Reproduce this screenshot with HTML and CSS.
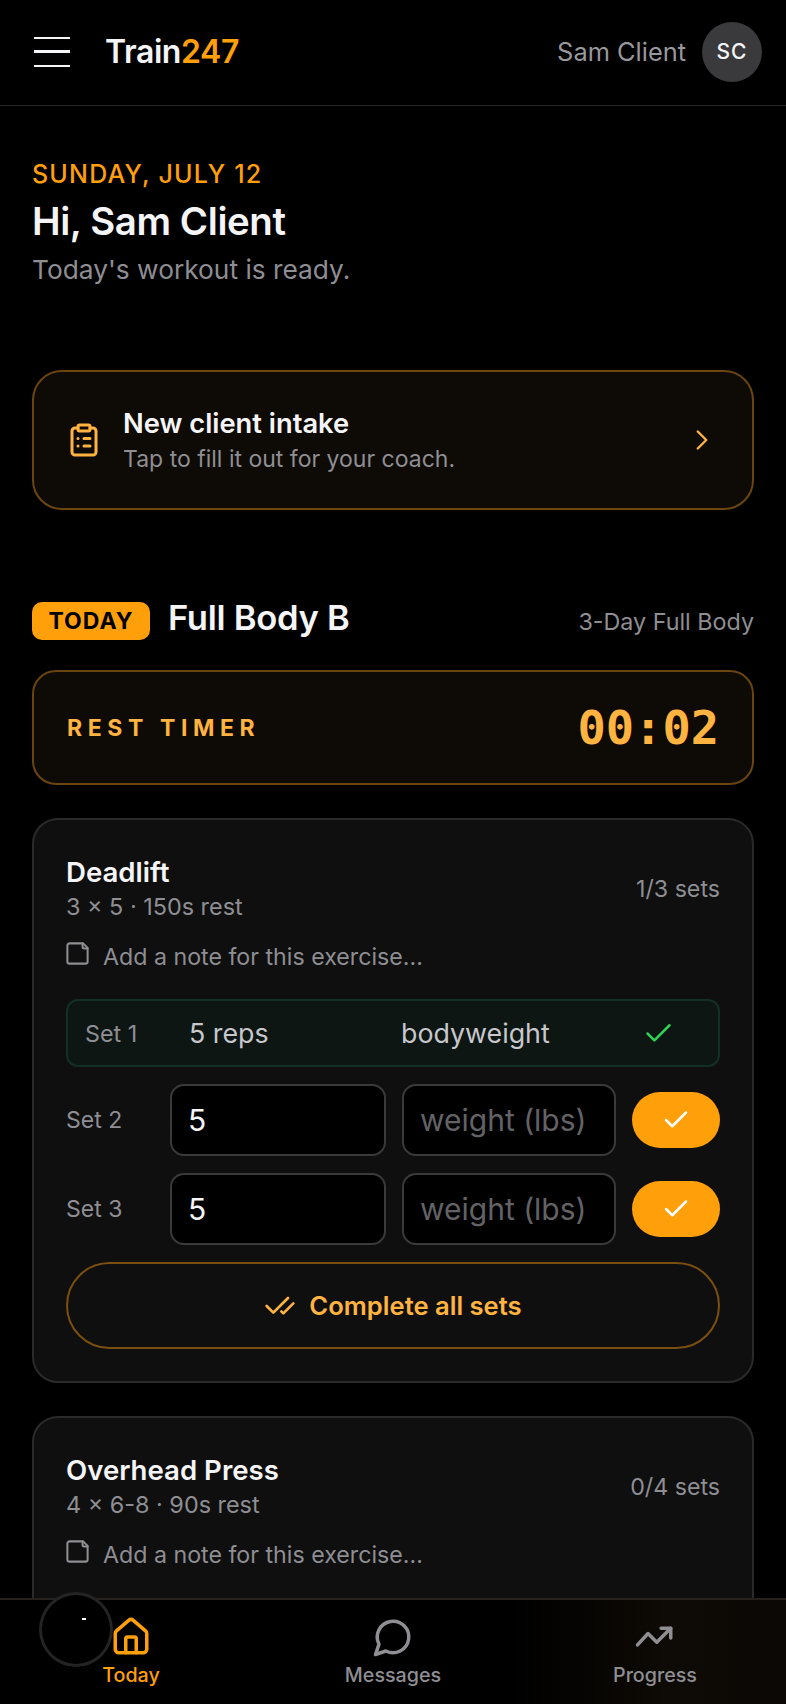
FILE: index.html
```html
<!DOCTYPE html>
<html lang="en">
<head>
    <meta charset="UTF-8">
    <meta name="viewport" content="width=device-width, initial-scale=1.0">
    <title>Train247</title>
    <link rel="stylesheet" href="styles.css">
</head>
<body>
    <div class="app">
        <header class="topbar">
            <div class="burger"><span></span><span class="mid"></span><span></span></div>
            <div class="logo">Train<span>247</span></div>
            <div class="user">Sam Client</div>
            <div class="avatar">SC</div>
        </header>

        <main class="content">
            <section class="hello">
                <div class="date">SUNDAY, JULY 12</div>
                <h1>Hi, Sam Client</h1>
                <p>Today's workout is ready.</p>
            </section>

            <section class="intake">
                <svg class="intake-icon" viewBox="0 0 24 24" fill="none" stroke="currentColor" stroke-width="2" stroke-linecap="round" stroke-linejoin="round">
                    <rect x="8" y="2" width="8" height="4" rx="1"/>
                    <path d="M16 4h2a2 2 0 0 1 2 2v14a2 2 0 0 1-2 2H6a2 2 0 0 1-2-2V6a2 2 0 0 1 2-2h2"/>
                    <path d="M12 11h4M12 16h4M8 11h.01M8 16h.01"/>
                </svg>
                <div class="intake-text">
                    <strong>New client intake</strong>
                    <span>Tap to fill it out for your coach.</span>
                </div>
                <svg class="chevron" viewBox="0 0 24 24" fill="none" stroke="currentColor" stroke-width="1.7" stroke-linecap="round" stroke-linejoin="round"><path d="m9 18 6-6-6-6"/></svg>
            </section>

            <section class="plan">
                <span class="badge">TODAY</span>
                <h2>Full Body B</h2>
                <span class="plan-name">3-Day Full Body</span>
            </section>

            <section class="timer">
                <span class="timer-label">REST TIMER</span>
                <span class="timer-value">00:02</span>
            </section>

            <section class="card">
                <div class="card-head">
                    <div>
                        <h3>Deadlift</h3>
                        <div class="meta">3 × 5 · 150s rest</div>
                    </div>
                    <div class="count">1/3 sets</div>
                </div>
                <div class="note">
                    <svg viewBox="0 0 24 24" fill="none" stroke="currentColor" stroke-width="1.8" stroke-linecap="round" stroke-linejoin="round"><path d="M17 3H5a2 2 0 0 0-2 2v14a2 2 0 0 0 2 2h14a2 2 0 0 0 2-2V7Z"/><path d="M16.5 3v3a1.5 1.5 0 0 0 1.5 1.5h3"/></svg>
                    <span>Add a note for this exercise...</span>
                </div>
                <div class="set-done">
                    <span class="set-label">Set 1</span>
                    <span class="done-reps">5 reps</span>
                    <span class="done-weight">bodyweight</span>
                    <svg viewBox="0 0 24 24" fill="none" stroke="currentColor" stroke-width="1.8" stroke-linecap="round" stroke-linejoin="round"><path d="M20 6 9 17l-5-5"/></svg>
                </div>
                <div class="set-row">
                    <span class="set-name">Set 2</span>
                    <input class="field" type="text" value="5">
                    <input class="field" type="text" placeholder="weight (lbs)">
                    <button class="log-btn"><svg viewBox="0 0 24 24" fill="none" stroke="currentColor" stroke-width="2" stroke-linecap="round" stroke-linejoin="round"><path d="M20 6 9 17l-5-5"/></svg></button>
                </div>
                <div class="set-row">
                    <span class="set-name">Set 3</span>
                    <input class="field" type="text" value="5">
                    <input class="field" type="text" placeholder="weight (lbs)">
                    <button class="log-btn"><svg viewBox="0 0 24 24" fill="none" stroke="currentColor" stroke-width="2" stroke-linecap="round" stroke-linejoin="round"><path d="M20 6 9 17l-5-5"/></svg></button>
                </div>
                <button class="complete">
                    <svg viewBox="0 0 24 24" fill="none" stroke="currentColor" stroke-width="2" stroke-linecap="round" stroke-linejoin="round"><path d="M18 6 7 17l-5-5"/><path d="m22 10-7.5 7.5L13 16"/></svg>
                    Complete all sets
                </button>
            </section>

            <section class="card card-next">
                <div class="card-head">
                    <div>
                        <h3>Overhead Press</h3>
                        <div class="meta">4 × 6-8 · 90s rest</div>
                    </div>
                    <div class="count">0/4 sets</div>
                </div>
                <div class="note">
                    <svg viewBox="0 0 24 24" fill="none" stroke="currentColor" stroke-width="1.8" stroke-linecap="round" stroke-linejoin="round"><path d="M17 3H5a2 2 0 0 0-2 2v14a2 2 0 0 0 2 2h14a2 2 0 0 0 2-2V7Z"/><path d="M16.5 3v3a1.5 1.5 0 0 0 1.5 1.5h3"/></svg>
                    <span>Add a note for this exercise...</span>
                </div>
            </section>
        </main>

        <nav class="tabs">
            <div class="tab active">
                <svg viewBox="0 0 24 24" fill="none" stroke="currentColor" stroke-width="2" stroke-linecap="round" stroke-linejoin="round"><path d="M15 21v-8a1 1 0 0 0-1-1h-4a1 1 0 0 0-1 1v8"/><path d="M3 10a2 2 0 0 1 .7-1.5l7-6a2 2 0 0 1 2.6 0l7 6a2 2 0 0 1 .7 1.5v9a2 2 0 0 1-2 2H5a2 2 0 0 1-2-2z"/></svg>
                <span>Today</span>
            </div>
            <div class="tab">
                <svg viewBox="0 0 24 24" fill="none" stroke="currentColor" stroke-width="2" stroke-linecap="round" stroke-linejoin="round"><path d="M7.9 20A9 9 0 1 0 4 16.1L2 22Z"/></svg>
                <span>Messages</span>
            </div>
            <div class="tab">
                <svg viewBox="0 0 24 24" fill="none" stroke="currentColor" stroke-width="2" stroke-linecap="round" stroke-linejoin="round"><path d="M21 7l-8 8-5-5-6 6.5"/><path d="M15.5 7H21v5.5"/></svg>
                <span>Progress</span>
            </div>
            <div class="bubble"><i></i></div>
        </nav>
    </div>
</body>
</html>
```

FILE: styles.css
```css
* {
    box-sizing: border-box;
}

html, body {
    margin: 0;
    height: 100%;
    background: #000;
}

body {
    font-family: Inter, "Noto Sans", sans-serif;
    color: #f5f5f7;
}

.app {
    height: 1704px;
    display: flex;
    flex-direction: column;
    overflow: hidden;
}

/* top bar */
.topbar {
    flex: none;
    height: 106px;
    padding: 0 24px 2px 34px;
    display: flex;
    align-items: center;
    border-bottom: 1px solid #2a2725;
}

.burger {
    width: 36px;
    display: flex;
    flex-direction: column;
    gap: 11.5px;
}

.burger span {
    height: 2px;
    background: #f5f5f7;
}

.burger .mid {
    height: 3px;
}

.logo {
    margin-left: 35px;
    font-size: 32px;
    font-weight: 600;
    letter-spacing: -0.4px;
}

.logo span {
    color: #ff9f0a;
}

.user {
    margin-left: auto;
    font-size: 25.4px;
    color: #98989d;
}

.avatar {
    width: 60px;
    height: 60px;
    margin-left: 16px;
    border-radius: 50%;
    background: #3a3a3c;
    display: flex;
    align-items: center;
    justify-content: center;
    font-size: 21px;
    font-weight: 500;
    letter-spacing: 1px;
}

/* main column */
.content {
    flex: 1;
    min-height: 0;
    padding: 54px 32px 0;
    overflow: hidden;
}

.date {
    font-size: 25px;
    font-weight: 500;
    line-height: 28px;
    letter-spacing: 1.2px;
    color: #ff9f0a;
}

.hello h1 {
    margin: 10px 0 0;
    font-size: 38.4px;
    line-height: 46px;
    font-weight: 600;
    letter-spacing: -0.4px;
}

.hello p {
    margin: 10px 0 0;
    font-size: 26.3px;
    line-height: 32px;
    color: #8e8e93;
}

.intake {
    margin-top: 84px;
    height: 140px;
    padding: 0 33px 0 32px;
    display: flex;
    align-items: center;
    background: #0e0a05;
    border: 2px solid #6b4510;
    border-radius: 30px;
    color: #ffb340;
}

.intake-icon {
    width: 36px;
    height: 36px;
    flex: none;
}

.intake-text {
    margin-left: 21px;
    flex: 1;
    display: flex;
    flex-direction: column;
}

.intake-text strong {
    font-size: 27.3px;
    line-height: 34px;
    font-weight: 600;
    color: #f5f5f7;
}

.intake-text span {
    margin-top: 3px;
    font-size: 23px;
    line-height: 30px;
    color: #8e8e93;
}

.chevron {
    width: 34px;
    height: 34px;
    flex: none;
}

.plan {
    margin-top: 92px;
    display: flex;
    align-items: center;
}

.badge {
    width: 118px;
    height: 38px;
    border-radius: 10px;
    background: #ff9f0a;
    color: #000;
    font-size: 23px;
    font-weight: 700;
    letter-spacing: 1px;
    display: flex;
    align-items: center;
    justify-content: center;
}

.plan h2 {
    margin: -8px 0 0 18px;
    font-size: 34.6px;
    line-height: 42px;
    font-weight: 600;
    letter-spacing: -0.3px;
}

.plan-name {
    margin: 0 0 0 auto;
    font-size: 23.3px;
    color: #8e8e93;
}

.timer {
    margin-top: 30px;
    height: 115px;
    padding: 0 33px;
    display: flex;
    align-items: center;
    justify-content: space-between;
    background: #0e0a05;
    border: 2px solid #6b4510;
    border-radius: 24px;
    color: #ffb340;
}

.timer-label {
    font-size: 23px;
    font-weight: 700;
    letter-spacing: 5.6px;
}

.timer-value {
    font-family: "DejaVu Sans Mono", "Liberation Mono", monospace;
    font-size: 47px;
    font-weight: 700;
}

/* exercise cards */
.card {
    margin-top: 33px;
    padding: 35px 32px 32px;
    background: #0f0f0f;
    border: 2px solid #2a2a2a;
    border-radius: 26px;
}

.card-next {
    min-height: 300px;
}

.card-head {
    display: flex;
    align-items: center;
    justify-content: space-between;
}

.card h3 {
    margin: 0;
    font-size: 27.6px;
    line-height: 34px;
    font-weight: 600;
}

.meta {
    margin-top: 2px;
    font-size: 23.4px;
    line-height: 32px;
    color: #8e8e93;
}

.count {
    font-size: 23.2px;
    color: #8e8e93;
}

.note {
    margin-top: 18px;
    height: 32px;
    display: flex;
    align-items: center;
    font-size: 23.2px;
    color: #8e8e93;
}

.note svg {
    width: 27px;
    height: 27px;
    margin: -8px 12px 0 -2px;
    flex: none;
}

.set-done {
    margin-top: 26px;
    height: 68px;
    padding: 0 43px 0 17px;
    display: flex;
    align-items: center;
    background: #0d1612;
    border: 2px solid #123023;
    border-radius: 12px;
    color: #30d158;
}

.set-done .set-label {
    width: 104px;
    font-size: 23.3px;
    color: #8e8e93;
}

.done-reps {
    width: 212px;
    font-size: 26.8px;
    color: #c7c7cc;
}

.done-weight {
    flex: 1;
    font-size: 26.8px;
    color: #c7c7cc;
}

.set-done svg {
    width: 33px;
    height: 33px;
}

.set-row {
    margin-top: 17px;
    display: flex;
    align-items: center;
}

.set-name {
    width: 104px;
    flex: none;
    font-size: 23px;
    color: #8e8e93;
}

.field {
    width: 216px;
    height: 72px;
    padding: 0 17px 0 16px;
    margin-right: 16px;
    background: #000;
    border: 2px solid #3a3a3c;
    border-radius: 14px;
    font-family: inherit;
    font-size: 30px;
    color: #f5f5f7;
    outline: none;
}

.field + .field {
    width: 214px;
}

.field::placeholder {
    color: #636366;
    opacity: 1;
}

.log-btn {
    width: 88px;
    height: 56px;
    padding: 0;
    border: none;
    border-radius: 28px;
    background: #ff9f0a;
    color: #fff;
    display: flex;
    align-items: center;
    justify-content: center;
}

.log-btn svg {
    width: 30px;
    height: 30px;
}

.complete {
    width: 100%;
    height: 87px;
    margin-top: 17px;
    background: none;
    border: 2px solid #7a4f10;
    border-radius: 44px;
    color: #ffb340;
    font-family: inherit;
    font-size: 25.6px;
    font-weight: 600;
    display: flex;
    align-items: center;
    justify-content: center;
    gap: 13px;
}

.complete svg {
    width: 32px;
    height: 32px;
}

/* bottom tabs */
.tabs {
    flex: none;
    position: relative;
    height: 106px;
    display: grid;
    grid-template-columns: repeat(3, 1fr);
    background: linear-gradient(90deg, #000 0%, #000 65%, #0e0a05 85%, #0b0805 100%);
    border-top: 2px solid #24211f;
}

.tab {
    padding-top: 16px;
    display: flex;
    flex-direction: column;
    align-items: center;
    color: #8e8e93;
    font-size: 19.7px;
    font-weight: 500;
}

.tab svg {
    width: 42px;
    height: 42px;
}

.tab span {
    margin-top: 5px;
}

.tab.active {
    color: #ff9f0a;
}

.bubble {
    position: absolute;
    left: 39px;
    top: -8px;
    width: 74px;
    height: 75px;
    background: #000;
    border: 3px solid #242424;
    border-radius: 50%;
}

.bubble i {
    position: absolute;
    left: 40px;
    top: 23px;
    width: 4px;
    height: 2px;
    background: #fff;
}
```
